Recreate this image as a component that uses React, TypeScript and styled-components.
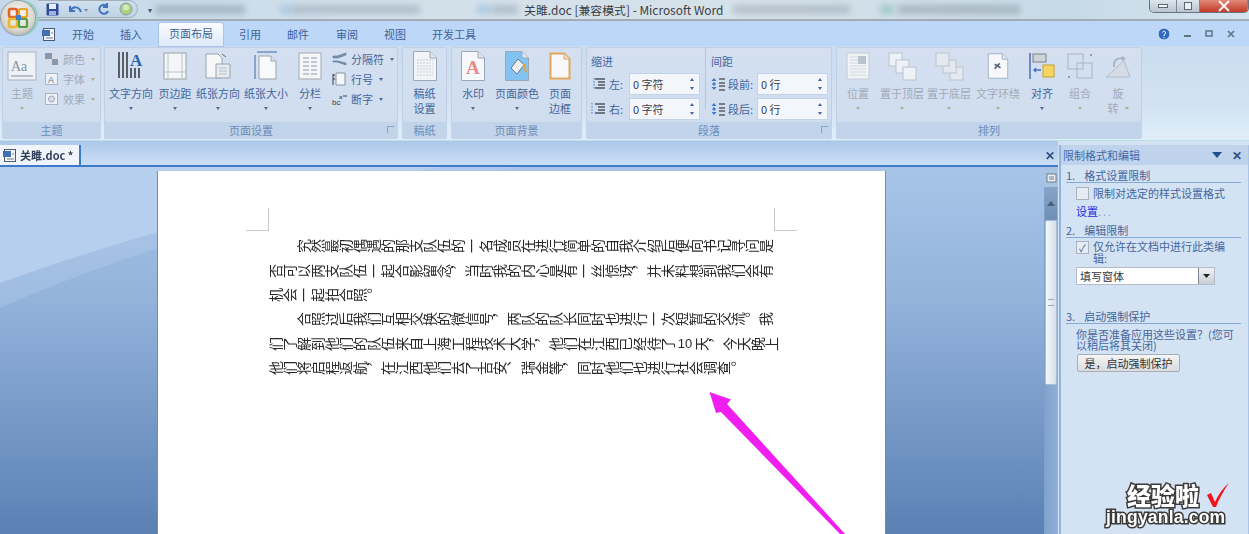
import React from "react";
import styled, { createGlobalStyle } from "styled-components";

const Global = createGlobalStyle`
  html, body { margin: 0; padding: 0; background: #d4e3f3; overflow: hidden; }
  body { font-family: "Noto Sans CJK SC", "Liberation Sans", sans-serif; }
`;

const Stage = styled.div`
  position: relative;
  width: 1249px;
  height: 534px;
  overflow: hidden;
`;
const Shell = styled.div`
  width: 1249px;
  height: 534px;
  display: flex;
  flex-direction: column;
  filter: blur(0.45px);
`;

/* title bar */
const TitleBar = styled.div`
  height: 19px;
  flex: none;
  display: flex;
  align-items: center;
  padding-left: 120px;
  background: linear-gradient(90deg, #c3d9ea 0%, #d2e0ea 30%, #d6e2ea 60%, #c6dae6 85%, #d3e4ef 100%);
  border-bottom: 2px solid #a3abb5;
  box-sizing: content-box;
`;
const Quick = styled.div`
  position: absolute;
  left: 38px;
  top: 0;
  width: 100px;
  height: 18px;
  display: flex;
  align-items: center;
  gap: 9px;
  padding-left: 8px;
  box-sizing: border-box;
  border-radius: 0 10px 10px 0;
  border: 1px solid #a4adb8;
  border-left: none;
  background: linear-gradient(#cfe0ee, #bfd3e5);
`;
const QuickMore = styled.span`
  margin-left: 28px;
  font-size: 8px;
  color: #44526a;
  width: 7px;
`;
const Ghost = styled.span<{ $w: number; $c: string; $ml?: number }>`
  flex: none;
  width: ${(p) => p.$w}px;
  height: 9px;
  margin-left: ${(p) => p.$ml ?? 0}px;
  background: ${(p) => p.$c};
  filter: blur(3px);
  opacity: 0.55;
`;
const TitleText = styled.span`
  flex: none;
  width: 199px;
  margin-left: 6px;
  font-size: 11.9px;
  color: #3a3d44;
  white-space: nowrap;
`;
const WinButtons = styled.div`
  margin-left: auto;
  width: 100px;
  height: 13px;
  margin-top: -6px;
  display: flex;
  box-sizing: border-box;
  border: 1px solid #6d7480;
  border-top: none;
  border-radius: 0 0 5px 5px;
  overflow: hidden;
`;
const WinButton = styled.span<{ $w: number; $close?: boolean }>`
  width: ${(p) => p.$w}px;
  display: flex;
  align-items: center;
  justify-content: center;
  background: ${(p) => (p.$close ? "linear-gradient(#e2897a, #c23a26)" : "linear-gradient(#dfe7ee, #b7c3cf)")};
  border-right: 1px solid #7f8792;
`;

/* tabs */
const TabBar = styled.div`
  height: 25px;
  flex: none;
  display: flex;
  align-items: center;
  padding-left: 59px;
  background: #bcd7f8;
  position: relative;
`;
const Tab = styled.div<{ $active?: boolean; $ml?: number }>`
  width: ${(p) => (p.$active ? "64px" : "48px")};
  margin-left: ${(p) => p.$ml ?? 0}px;
  height: ${(p) => (p.$active ? "23px" : "auto")};
  margin-top: ${(p) => (p.$active ? "2px" : "0")};
  text-align: center;
  font-size: 11px;
  line-height: 20px;
  color: #3f6297;
  border-radius: 3px 3px 0 0;
  background: ${(p) => (p.$active ? "linear-gradient(#fafcff, #dce9f7)" : "transparent")};
  box-shadow: ${(p) => (p.$active ? "0 0 0 1px #a9c6ea" : "none")};
`;
const RightTools = styled.div`
  margin-left: auto;
  display: flex;
  align-items: center;
  gap: 13px;
  padding-right: 14px;
`;
const DocMark = styled.span`
  position: absolute;
  left: 41px;
  top: 2px;
`;

/* ribbon */
const Ribbon = styled.div`
  height: 95px;
  flex: none;
  box-sizing: border-box;
  display: flex;
  gap: 3px;
  padding: 1px 4px 1px 2px;
  background: linear-gradient(#cbdcf0, #d2e2f3 60%, #dfeef9);
  border-bottom: 1px solid #b9dfe6;
`;
const Group = styled.section<{ $w: number; $mr?: number }>`
  flex: none;
  width: ${(p) => p.$w}px;
  margin-right: ${(p) => p.$mr ?? 0}px;
  display: flex;
  flex-direction: column;
  border-radius: 3px;
  overflow: hidden;
  background: linear-gradient(#d4e0f0, #d2dff0 40%, #cddcee);
  box-shadow: inset 0 0 0 1px #bfd0e6;
`;
const GroupBody = styled.div`
  height: 75px;
  flex: none;
  display: flex;
  align-items: flex-start;
`;
const GroupLabel = styled.div`
  flex: 1;
  position: relative;
  text-align: center;
  font-size: 11px;
  line-height: 17px;
  color: #6a8cb9;
  background: #c1d4ea;
`;
const Launcher = styled.span`
  position: absolute;
  right: 4px;
  top: 4px;
  width: 6px;
  height: 6px;
  border: 1px solid #8ca4c4;
  border-width: 1px 0 0 1px;
`;
const Large = styled.div<{ $w: number; $off?: boolean; $ml?: number }>`
  flex: none;
  width: ${(p) => p.$w}px;
  margin-left: ${(p) => p.$ml ?? 0}px;
  display: flex;
  flex-direction: column;
  align-items: center;
  padding-top: 3px;
  font-size: 11px;
  line-height: 15px;
  color: ${(p) => (p.$off ? "#a0aab8" : "#44659b")};
  white-space: nowrap;
`;
const LargeIcon = styled.div`
  height: 32px;
  margin-bottom: 4px;
  display: flex;
  align-items: center;
`;
const Caret = styled.span<{ $off?: boolean }>`
  width: 0;
  height: 0;
  margin: 6px 0;
  border: 2.5px solid transparent;
  border-top: 3px solid ${(p) => (p.$off ? "#b3a998" : "#4c6a96")};
  border-bottom: none;
  display: inline-block;
`;
const SmallColumn = styled.div<{ $off?: boolean; $ml?: number }>`
  display: flex;
  flex-direction: column;
  margin-left: ${(p) => p.$ml ?? 0}px;
  padding-top: 2px;
  font-size: 11px;
  color: ${(p) => (p.$off ? "#a0aab8" : "#44659b")};
`;
const SmallItem = styled.div`
  height: 20px;
  display: flex;
  align-items: center;
  gap: 3px;
  white-space: nowrap;
`;
const InlineCaretItem = styled(SmallItem)`
  height: 15px;
`;
const SmallCaret = styled(Caret)`
  margin: 0 0 0 3px;
`;

/* paragraph group */
const ParaColumn = styled.div<{ $w: number; $divider?: boolean }>`
  flex: none;
  width: ${(p) => p.$w}px;
  box-sizing: border-box;
  padding: 7px ${(p) => (p.$divider ? "5px" : "0")} 0 5px;
  border-right: ${(p) => (p.$divider ? "1px solid #b4c6dc" : "none")};
  height: 62px;
`;
const ParaTitle = styled.div`
  font-size: 11px;
  line-height: 14px;
  color: #44659b;
  margin-bottom: 5px;
`;
const ParaRow = styled.div`
  display: flex;
  align-items: center;
  gap: 3px;
  height: 22px;
  margin-bottom: 3px;
  font-size: 11px;
  color: #44659b;
`;
const Spin = styled.div<{ $w: number }>`
  width: ${(p) => p.$w}px;
  height: 22px;
  box-sizing: border-box;
  margin-left: auto;
  display: flex;
  align-items: center;
  justify-content: space-between;
  padding: 0 5px 0 3px;
  background: #f3f7fc;
  border: 1px solid #c3d3e7;
  font-size: 11px;
  color: #3b3f48;
`;
const SpinArrows = styled.div`
  display: flex;
  flex-direction: column;
  gap: 6px;
`;
const ArrowTip = styled.span<{ $up?: boolean }>`
  width: 0;
  height: 0;
  border: 2.5px solid transparent;
  ${(p) => (p.$up ? "border-bottom: 3px solid #44659b; border-top: none;" : "border-top: 3px solid #44659b; border-bottom: none;")}
`;

/* work area */
const Work = styled.div`
  flex: 1;
  min-height: 0;
  display: flex;
`;
const LeftSide = styled.div`
  width: 1058px;
  flex: none;
  display: flex;
  flex-direction: column;
`;
const Strip = styled.div`
  height: 24px;
  flex: none;
  display: flex;
  align-items: flex-end;
  border-bottom: 2px solid #3e7bcb;
  background: linear-gradient(#abc7ea, #cbdef5);
`;
const DocTab = styled.div`
  width: 81px;
  height: 20px;
  display: flex;
  align-items: center;
  gap: 3px;
  padding-left: 2px;
  box-sizing: border-box;
  background: #f0f5fb;
  border-right: 2px solid #3e7bcb;
  font-size: 11px;
  font-weight: 700;
  color: #2f3f58;
  white-space: nowrap;
`;
const StripClose = styled.span`
  margin-left: auto;
  margin-right: 3px;
  margin-bottom: 3px;
  font-size: 12px;
  font-weight: 700;
  color: #30507f;
  line-height: 14px;
`;
const DocRow = styled.div`
  flex: 1;
  display: flex;
  min-height: 0;
`;
const DocArea = styled.div`
  position: relative;
  width: 1044px;
  flex: none;
  padding: 4px 0 0 158px;
  box-sizing: border-box;
  overflow: hidden;
  background: linear-gradient(#a8c5e8, #93b3db 36%, #5a80b4);
`;
const Swoosh = styled.svg`
  position: absolute;
  left: 0;
  top: 0;
`;
const Page = styled.div`
  position: relative;
  width: 727px;
  height: 400px;
  box-sizing: border-box;
  padding: 37px 88px 0 88px;
  background: #fff;
  box-shadow: -1px 0 0 #85898f, 1px 0 0 #85898f;
`;
const CropRow = styled.div`
  display: flex;
  justify-content: space-between;
  width: 551px;
  height: 22px;
  margin-bottom: 4px;
`;
const Crop = styled.span<{ $right?: boolean }>`
  width: 22px;
  height: 22px;
  border-bottom: 1px solid #c9c9c9;
  ${(p) => (p.$right ? "border-left: 1px solid #c9c9c9;" : "border-right: 1px solid #c9c9c9;")}
`;
const Line = styled.div<{ $indent?: boolean }>`
  height: 24.4px;
  display: flex;
  align-items: center;
  margin-left: 23px;
  padding-left: ${(p) => (p.$indent ? "28px" : "0")};
  font-size: 14px;
  color: #2a2a2a;
  white-space: nowrap;
  width: 530px;
`;
/* the document uses rotated text: vertical glyph forms turned a quarter to the left */
const Glyph = styled.span`
  flex: none;
  width: 14px;
  height: 14px;
  line-height: 14px;
  writing-mode: vertical-rl;
  transform: rotate(-90deg);
`;
const Latin = styled.span`
  flex: none;
  width: 20px;
  text-align: center;
  font-family: "Liberation Sans", sans-serif;
  font-size: 13px;
`;

/* scroll bar */
const ScrollBar = styled.div`
  width: 14px;
  flex: none;
  display: flex;
  flex-direction: column;
  align-items: center;
  background: linear-gradient(90deg, #7fa1cb, #8fb0d8);
`;
const RulerBtn = styled.div`
  height: 20px;
  width: 14px;
  display: flex;
  align-items: center;
  justify-content: center;
  background: #a9c3e2;
`;
const ScrollUp = styled.div`
  width: 12px;
  height: 33px;
  display: flex;
  align-items: center;
  justify-content: center;
  background: linear-gradient(#88a4c6, #6f8fb6);
`;
const Thumb = styled.div`
  width: 12px;
  height: 165px;
  display: flex;
  align-items: center;
  justify-content: center;
  background: linear-gradient(90deg, #f4f7fb, #d6e0ea);
  border: 1px solid #a8bdd6;
  border-radius: 2px;
  box-sizing: border-box;
`;
const Grip = styled.span`
  width: 6px;
  height: 5px;
  border-top: 1px solid #9aa9bb;
  border-bottom: 1px solid #9aa9bb;
`;

/* task pane */
const Pane = styled.aside`
  flex: 1;
  margin: 4px 0 0 1px;
  display: flex;
  flex-direction: column;
  background: #d4e3f3;
  border-left: 2px solid #92b3db;
  border-right: 3px solid #a9c4e4;
  color: #44659b;
  font-size: 11px;
  line-height: 12px;
`;
const PaneHead = styled.div`
  height: 20px;
  flex: none;
  display: flex;
  align-items: center;
  padding: 0 6px 0 2px;
  background: #bfd3ec;
  color: #4668a3;
`;
const PaneActions = styled.div`
  margin-left: auto;
  display: flex;
  align-items: center;
  gap: 10px;
  color: #30507f;
  font-weight: 700;
  font-size: 12px;
`;
const PaneBody = styled.div`
  padding: 3px 7px 0 5px;
`;
const SectionTitle = styled.div<{ $mt?: number }>`
  margin-top: ${(p) => p.$mt ?? 0}px;
  border-bottom: 1px solid #84a8d8;
  display: flex;
  gap: 9px;
  line-height: 14px;
  height: 14px;
`;
const CheckRow = styled.div<{ $mt: number }>`
  display: flex;
  gap: 4px;
  margin: ${(p) => p.$mt}px 0 0 10px;
`;
const CheckText = styled.span`
  width: 132px;
  line-height: 11.5px;
`;
const Check = styled.span`
  width: 11px;
  height: 11px;
  flex: none;
  display: flex;
  align-items: center;
  justify-content: center;
  background: #e6ecf4;
  border: 1px solid #aab2bd;
  font-size: 10px;
  color: #3f5070;
`;
const LinkText = styled.div`
  margin: 5px 0 0 10px;
  color: #2a2ae6;
`;
const LinkDots = styled.span`
  color: #7f9fe0;
  letter-spacing: 2px;
`;
const SelectBox = styled.div`
  width: 139px;
  height: 18px;
  margin: 3px 0 0 10px;
  box-sizing: border-box;
  display: flex;
  align-items: center;
  justify-content: space-between;
  padding-left: 3px;
  background: #fff;
  border: 1px solid #b3bdca;
  color: #34383f;
`;
const SelectArrow = styled.span`
  width: 15px;
  height: 16px;
  display: flex;
  align-items: center;
  justify-content: center;
  background: linear-gradient(#eef1f4, #c9ced6);
  border-left: 1px solid #7e8792;
`;
const Hint = styled.div`
  margin: 5px 0 0 10px;
  width: 165px;
  line-height: 11px;
`;
const PaneButton = styled.div`
  width: 103px;
  height: 18px;
  margin: 3px 0 0 11px;
  display: flex;
  align-items: center;
  justify-content: center;
  box-sizing: border-box;
  background: linear-gradient(#f4f5f6, #d9dbdf);
  border: 1px solid #a9adb4;
  border-radius: 2px;
  color: #333;
  white-space: nowrap;
`;

/* overlays */
const Orb = styled.div`
  position: absolute;
  left: 1px;
  top: 1px;
  width: 34px;
  height: 34px;
  border-radius: 50%;
  display: flex;
  align-items: center;
  justify-content: center;
  background: radial-gradient(circle at 50% 40%, #fdfdfb, #d9d7cf 60%, #8c8f90);
  box-shadow: 0 0 0 1px #96a0a4, 3px 0 0 1px #9bd0c8;
`;
const ArrowLayer = styled.svg`
  position: absolute;
  left: 700px;
  top: 385px;
`;
const Watermark = styled.div`
  position: absolute;
  left: 1106px;
  top: 481px;
  width: 130px;
  font-family: "Liberation Sans", "Noto Sans CJK SC", sans-serif;
  font-weight: 900;
  color: #fff;
  -webkit-text-stroke: 3px #3a3a3a;
  paint-order: stroke fill;
`;
const MarkTop = styled.div`
  display: flex;
  align-items: center;
  padding-left: 21px;
  font-size: 24px;
  line-height: 28px;
  font-family: "Noto Sans CJK SC", sans-serif;
  gap: 7px;
`;
const MarkBottom = styled.div`
  font-size: 17.5px;
  line-height: 17px;
  white-space: nowrap;
  letter-spacing: 0.2px;
`;

/* icons */
const Page32 = ({ children, w = 26, fill = "#f6f8fb" }: { children?: React.ReactNode; w?: number; fill?: string }) => (
  <svg width={w} height={32} viewBox="0 0 26 32">
    <path d="M1.5 1.5H18L24.5 8V30.5H1.5Z" fill={fill} stroke="#98a8bc" />
    <path d="M18 1.5V8H24.5" fill="#dfe6ef" stroke="#98a8bc" />
    {children}
  </svg>
);
const ThemeIcon = () => (
  <svg width={30} height={30} viewBox="0 0 30 30">
    <rect x="1" y="1" width="28" height="28" fill="#eef1f5" stroke="#a7b4c4" />
    <text x="4" y="20" fontFamily="Liberation Serif" fontSize="14" fill="#8793a5">Aa</text>
    <rect x="4" y="24" width="22" height="2" fill="#b8c2cf" />
  </svg>
);
const TextDirIcon = () => (
  <svg width={28} height={30} viewBox="0 0 28 30">
    {[2, 6, 10, 14, 18, 22].map((x, i) => (
      <path key={x} d={`M${x} ${i < 3 ? 1 : 17}V27`} stroke="#3b3f48" strokeWidth="1.6" />
    ))}
    <text x="13" y="15" fontFamily="Liberation Serif" fontWeight="700" fontSize="17" fill="#2f62ad">A</text>
  </svg>
);
const MarginIcon = () => (
  <svg width={24} height={28} viewBox="0 0 24 28">
    <rect x="1" y="1" width="22" height="26" fill="#f5f6f8" stroke="#9aa0a8" />
    <path d="M5 1V27M19 1V27M1 20H23" stroke="#bcc3cc" />
  </svg>
);
const OrientIcon = () => (
  <svg width={28} height={30} viewBox="0 0 28 30">
    <path d="M2 3H14L18 7V27H2Z" fill="#f6f7f9" stroke="#9aa3ae" />
    <path d="M12 13H26V27H12Z" fill="#e7ebf0" stroke="#9aa3ae" />
    <path d="M15 17H23M15 20H23M15 23H23" stroke="#b8c0ca" />
    <path d="M18 3L22 6" stroke="#5a6a80" />
  </svg>
);
const SizeIcon = () => (
  <svg width={24} height={30} viewBox="0 0 24 30">
    <path d="M1 4V28" stroke="#3f6aa6" />
    <path d="M3 1H23" stroke="#3f6aa6" />
    <path d="M5 5H17L22 10V28H5Z" fill="#f8f9fb" stroke="#9aa3ae" />
    <path d="M17 5V10H22" fill="#e0e5ec" stroke="#9aa3ae" />
  </svg>
);
const ColumnsIcon = () => (
  <svg width={24} height={28} viewBox="0 0 24 28">
    <rect x="1" y="1" width="22" height="26" fill="#f5f6f8" stroke="#a4a9b0" />
    {[6, 10, 14, 18, 22].map((y) => (
      <path key={y} d={`M5 ${y}H11M13 ${y}H19`} stroke="#c3c9d1" strokeWidth="2" />
    ))}
  </svg>
);
const SmallGlyph = ({ kind }: { kind: string }) => (
  <svg width={16} height={14} viewBox="0 0 16 14">
    {kind === "color" && (
      <>
        <rect x="1" y="1" width="13" height="12" fill="#d7dde6" />
        <rect x="1" y="1" width="7" height="6" fill="#8a98ac" />
        <rect x="8" y="7" width="6" height="6" fill="#8a98ac" />
      </>
    )}
    {kind === "font" && (
      <>
        <rect x="1.5" y="1.5" width="12" height="11" fill="#eef1f5" stroke="#aab4c1" />
        <text x="4" y="11" fontSize="9" fontFamily="Liberation Sans" fill="#6c7c93">A</text>
      </>
    )}
    {kind === "effect" && (
      <>
        <rect x="1.5" y="1.5" width="12" height="11" fill="#eef1f5" stroke="#aab4c1" />
        <circle cx="7.5" cy="7" r="3" fill="#d7dde6" stroke="#9aa7b8" />
      </>
    )}
    {kind === "break" && (
      <path d="M1 4H5L14 1V3L6 6H1ZM1 9H6L14 11V13L5 10H1Z" fill="#8593a6" stroke="#3f6aa6" strokeWidth=".5" />
    )}
    {kind === "lines" && (
      <>
        <path d="M4 1H13V13H4Z" fill="#f5f6f8" stroke="#8593a6" />
        <path d="M1 2V13M2 2V4M2 6V8" stroke="#3b3f48" />
      </>
    )}
    {kind === "hyphen" && (
      <>
        <text x="0" y="13" fontSize="8" fontFamily="Liberation Sans" fill="#3b3f48">bc</text>
        <text x="7" y="7" fontSize="6" fontFamily="Liberation Sans" fill="#3b3f48">a</text>
        <path d="M11 4H15" stroke="#3b3f48" />
      </>
    )}
  </svg>
);
const IndentIcon = ({ dashed }: { dashed?: boolean }) => (
  <svg width={15} height={14} viewBox="0 0 15 14">
    <path d="M4 2H14M7 5H14M7 8H14M4 11H14" stroke="#50565f" strokeWidth="1.4" />
    <path d={dashed ? "M1 1V13" : "M3 1V13"} stroke="#3f7acb" strokeDasharray="1.5 1.5" />
  </svg>
);
const SpacingIcon = () => (
  <svg width={14} height={14} viewBox="0 0 14 14">
    <path d="M8 2H14M8 6H14M8 9H14M8 13H14" stroke="#5a5f68" strokeWidth="1.6" />
    <path d="M3 1L5.5 4H.5ZM3 13L5.5 10H.5ZM3 5L5 7L3 9L1 7Z" fill="#3f7acb" />
  </svg>
);
const WatermarkPageIcon = () => (
  <Page32>
    <text x="6" y="24" fontFamily="Liberation Serif" fontWeight="700" fontSize="19" fill="#e58d86">A</text>
  </Page32>
);
const PageColorIcon = () => (
  <Page32 fill="#82c3f2">
    <path d="M7 18L14 9L20 15L13 24Z" fill="#eceff3" stroke="#6c7787" />
    <path d="M20 14L22 22" stroke="#e2a73f" strokeWidth="2" />
  </Page32>
);
const PageBorderIcon = () => (
  <svg width={22} height={28} viewBox="0 0 22 28">
    <path d="M1.5 1.5H15L20.5 7V26.5H1.5Z" fill="#f7f8fa" stroke="#e3a65d" strokeWidth="2" />
    <path d="M15 1.5V7H20.5" fill="#f3dec4" stroke="#d5a670" />
  </svg>
);
const GridPageIcon = () => (
  <Page32 fill="#f2f4f7">
    {[10, 13, 16, 19, 22, 25].map((y) => (
      <path key={y} d={`M5 ${y}H21`} stroke="#c8ced6" strokeDasharray="2 1" />
    ))}
  </Page32>
);
const PositionIcon = () => (
  <svg width={24} height={28} viewBox="0 0 24 28">
    <rect x="1" y="1" width="22" height="26" fill="#f0f3f6" stroke="#c4ccd6" />
    {[5, 8, 11, 14, 17, 20, 23].map((y) => (
      <path key={y} d={`M4 ${y}H20`} stroke="#d3d9e0" />
    ))}
    <rect x="12" y="4" width="8" height="8" fill="#b9c3cf" />
  </svg>
);
const StackIcon = ({ flip }: { flip?: boolean }) => {
  const rects = [
    [1, 1],
    [8, 8],
    [15, 15],
  ];
  return (
    <svg width={29} height={29} viewBox="0 0 29 29">
      {(flip ? [...rects].reverse() : rects).map(([x, y]) => (
        <rect key={x} x={x} y={y} width="13" height="13" fill={flip ? "#e4e9ef" : "#eef1f5"} stroke="#b9c3cf" />
      ))}
    </svg>
  );
};
const WrapIcon = () => (
  <Page32 w={22}>
    <path d="M9 14L16 18M9 19L15 13" stroke="#58657a" strokeWidth="2" />
  </Page32>
);
const AlignIcon = () => (
  <svg width={26} height={28} viewBox="0 0 26 28">
    <path d="M1 1V27" stroke="#4168ad" strokeWidth="1.4" />
    <rect x="4" y="2" width="13" height="8" fill="#cfd3d8" stroke="#7b8089" />
    <rect x="14" y="13" width="11" height="12" fill="#f6d55f" stroke="#c7a02e" />
    <path d="M12 18H5M7 16L5 18L7 20" stroke="#3f73c2" strokeWidth="1.3" fill="none" />
  </svg>
);
const GroupIcon = () => (
  <svg width={26} height={26} viewBox="0 0 26 26">
    <rect x="1" y="1" width="15" height="15" fill="none" stroke="#aab4c1" />
    <rect x="10" y="10" width="15" height="15" fill="none" stroke="#aab4c1" />
    <circle cx="2" cy="24" r="1" fill="#7f8b9b" />
    <circle cx="24" cy="2" r="1" fill="#7f8b9b" />
  </svg>
);
const RotateIcon = () => (
  <svg width={28} height={26} viewBox="0 0 28 26">
    <path d="M2 24L20 8L26 24Z" fill="#d5dce5" stroke="#b2bcc9" />
    <path d="M10 14C9 6 15 4 20 6" fill="none" stroke="#a3aebc" strokeWidth="1.6" />
    <path d="M18 3L22 6L18 8Z" fill="#a3aebc" />
  </svg>
);
const WordDocIcon = () => (
  <svg width={15} height={15} viewBox="0 0 15 15">
    <rect x="2.5" y="1.5" width="11" height="12" fill="#f3f6fa" stroke="#4b5a70" />
    <rect x="1" y="3" width="8" height="6" fill="#3f6fb5" />
    <path d="M5 11H12M10 6H12" stroke="#6c7a8e" />
  </svg>
);
const OfficeLogo = () => (
  <svg width={22} height={22} viewBox="0 0 22 22">
    <rect x="2" y="2" width="8" height="8" rx="1.5" fill="none" stroke="#e0662b" strokeWidth="2.6" />
    <rect x="12" y="2" width="8" height="8" rx="1.5" fill="none" stroke="#e9a12a" strokeWidth="2.2" />
    <rect x="2" y="12" width="8" height="8" rx="1.5" fill="none" stroke="#e9b92c" strokeWidth="2.6" />
    <rect x="12" y="12" width="8" height="8" rx="1.5" fill="none" stroke="#4f9f46" strokeWidth="2.2" />
    <rect x="9" y="8" width="5" height="5" fill="#3f7fc8" />
  </svg>
);

const toGlyphs = (text: string) =>
  text.split("").map((ch, i) => (ch === "#" ? <Latin key={i}>10</Latin> : <Glyph key={i}>{ch}</Glyph>));

const PARAGRAPH: { text: string; indent?: boolean }[] = [
  { text: "究然最初偶遇的那支队伍的一名成员在进行简单的自我介绍后便向书记寻问是", indent: true },
  { text: "否可以两支队伍一起合影留念，当时我的内心是有一丝惊讶，并未料想到我们会有" },
  { text: "机会一起拍合照。" },
  { text: "合照过后我们互相交换的微信号，两队的队长同时也进行一次短暂的交流。我", indent: true },
  { text: "们了解到他们的队伍来自上海工程技术大学，他们在江西已经待了#天，今天晚上" },
  { text: "他们将启程返航，在江西他们去了吉安、瑞金等，同时他们也进行社会调查。" },
];

const TABS: { label: string; ml?: number }[] = [
  { label: "开始" },
  { label: "插入" },
  { label: "页面布局", ml: 4 },
  { label: "引用", ml: 3 },
  { label: "邮件" },
  { label: "审阅", ml: 1 },
  { label: "视图" },
  { label: "开发工具", ml: 11 },
];

const ArrangeItems: { label: string[]; w: number; icon: React.ReactNode; off: boolean; inlineCaret?: boolean }[] = [
  { label: ["位置"], w: 44, icon: <PositionIcon />, off: true },
  { label: ["置于顶层"], w: 44, icon: <StackIcon />, off: true },
  { label: ["置于底层"], w: 50, icon: <StackIcon flip />, off: true },
  { label: ["文字环绕"], w: 48, icon: <WrapIcon />, off: true },
  { label: ["对齐"], w: 40, icon: <AlignIcon />, off: false },
  { label: ["组合"], w: 36, icon: <GroupIcon />, off: true },
  { label: ["旋", "转"], w: 40, icon: <RotateIcon />, off: true, inlineCaret: true },
];

const SpinField = ({ value }: { value: string }) => (
  <Spin $w={71}>
    {value}
    <SpinArrows>
      <ArrowTip $up />
      <ArrowTip />
    </SpinArrows>
  </Spin>
);

export default function App() {
  return (
    <Stage>
      <Global />
      <Shell>
        <TitleBar>
          <QuickMore>▾</QuickMore>
          <Ghost $w={90} $c="#8b97a5" />
          <Ghost $w={12} $c="#8fb7dc" $ml={35} />
          <Ghost $w={128} $c="#98a6b4" />
          <Ghost $w={14} $c="#8fb7dc" $ml={57} />
          <Ghost $w={26} $c="#98a6b4" $ml={1} />
          <TitleText>关雎.doc [兼容模式] - Microsoft Word</TitleText>
          <Ghost $w={117} $c="#9aa7b3" $ml={10} />
          <Ghost $w={14} $c="#7fb9ad" $ml={30} />
          <Ghost $w={122} $c="#8d99a6" $ml={4} />
          <WinButtons>
            <WinButton $w={27}>
              <svg width={10} height={5}><rect x=".5" y=".5" width="9" height="3" fill="#f5f7f9" stroke="#5e6670" /></svg>
            </WinButton>
            <WinButton $w={24}>
              <svg width={10} height={10}><rect x="1.5" y="1.5" width="7" height="7" fill="#edf1f5" stroke="#5e6670" /></svg>
            </WinButton>
            <WinButton $w={49} $close>
              <svg width={16} height={12}><path d="M3 1L13 11M13 1L3 11" stroke="#f4f4f4" strokeWidth="2" /></svg>
            </WinButton>
          </WinButtons>
        </TitleBar>

        <TabBar>
          <DocMark><WordDocIcon /></DocMark>
          {TABS.map((tab) => (
            <Tab key={tab.label} $active={tab.label === "页面布局"} $ml={tab.ml}>
              {tab.label}
            </Tab>
          ))}
          <RightTools>
            <svg width={14} height={14} viewBox="0 0 14 14">
              <circle cx="7" cy="7" r="6" fill="#2f6bc4" stroke="#d5e2f3" />
              <path d="M5.5 5.5C6 3.5 9 4 8.5 6L7 8V9M7 10V11" stroke="#fff" fill="none" />
            </svg>
            <svg width={8} height={8}><path d="M0 6H7" stroke="#5f7184" strokeWidth="2" /></svg>
            <svg width={9} height={9}><rect x="1" y="2" width="6" height="5" fill="none" stroke="#5f7184" strokeWidth="1.5" /></svg>
            <svg width={8} height={8}><path d="M1 1L7 7M7 1L1 7" stroke="#5f7184" strokeWidth="1.6" /></svg>
          </RightTools>
        </TabBar>

        <Ribbon>
          <Group $w={99}>
            <GroupBody>
              <Large $w={40} $off>
                <LargeIcon><ThemeIcon /></LargeIcon>
                主题
                <Caret $off />
              </Large>
              <SmallColumn $off $ml={2}>
                <SmallItem><SmallGlyph kind="color" />颜色<SmallCaret $off /></SmallItem>
                <SmallItem><SmallGlyph kind="font" />字体<SmallCaret $off /></SmallItem>
                <SmallItem><SmallGlyph kind="effect" />效果<SmallCaret $off /></SmallItem>
              </SmallColumn>
            </GroupBody>
            <GroupLabel>主题</GroupLabel>
          </Group>

          <Group $w={294} $mr={1}>
            <GroupBody>
              <Large $w={46} $ml={4}><LargeIcon><TextDirIcon /></LargeIcon>文字方向<Caret /></Large>
              <Large $w={42}><LargeIcon><MarginIcon /></LargeIcon>页边距<Caret /></Large>
              <Large $w={44}><LargeIcon><OrientIcon /></LargeIcon>纸张方向<Caret /></Large>
              <Large $w={52}><LargeIcon><SizeIcon /></LargeIcon>纸张大小<Caret /></Large>
              <Large $w={36}><LargeIcon><ColumnsIcon /></LargeIcon>分栏<Caret /></Large>
              <SmallColumn $ml={4}>
                <SmallItem><SmallGlyph kind="break" />分隔符<SmallCaret /></SmallItem>
                <SmallItem><SmallGlyph kind="lines" />行号<SmallCaret /></SmallItem>
                <SmallItem><SmallGlyph kind="hyphen" />断字<SmallCaret /></SmallItem>
              </SmallColumn>
            </GroupBody>
            <GroupLabel>页面设置<Launcher /></GroupLabel>
          </Group>

          <Group $w={45} $mr={1}>
            <GroupBody>
              <Large $w={45}><LargeIcon><GridPageIcon /></LargeIcon>稿纸<br />设置</Large>
            </GroupBody>
            <GroupLabel>稿纸</GroupLabel>
          </Group>

          <Group $w={131} $mr={1}>
            <GroupBody>
              <Large $w={44}><LargeIcon><WatermarkPageIcon /></LargeIcon>水印<Caret /></Large>
              <Large $w={44}><LargeIcon><PageColorIcon /></LargeIcon>页面颜色<Caret /></Large>
              <Large $w={42}><LargeIcon><PageBorderIcon /></LargeIcon>页面<br />边框</Large>
            </GroupBody>
            <GroupLabel>页面背景</GroupLabel>
          </Group>

          <Group $w={246} $mr={1}>
            <GroupBody>
              <ParaColumn $w={120} $divider>
                <ParaTitle>缩进</ParaTitle>
                <ParaRow><IndentIcon />左:<SpinField value="0 字符" /></ParaRow>
                <ParaRow><IndentIcon dashed />右:<SpinField value="0 字符" /></ParaRow>
              </ParaColumn>
              <ParaColumn $w={122}>
                <ParaTitle>间距</ParaTitle>
                <ParaRow><SpacingIcon />段前:<SpinField value="0 行" /></ParaRow>
                <ParaRow><SpacingIcon />段后:<SpinField value="0 行" /></ParaRow>
              </ParaColumn>
            </GroupBody>
            <GroupLabel>段落<Launcher /></GroupLabel>
          </Group>

          <Group $w={306}>
            <GroupBody>
              {ArrangeItems.map((item) => (
                <Large key={item.label[0]} $w={item.w} $off={item.off}>
                  <LargeIcon>{item.icon}</LargeIcon>
                  {item.label[0]}
                  {item.inlineCaret ? (
                    <InlineCaretItem>{item.label[1]}<SmallCaret $off /></InlineCaretItem>
                  ) : (
                    <Caret $off={item.off} />
                  )}
                </Large>
              ))}
            </GroupBody>
            <GroupLabel>排列</GroupLabel>
          </Group>
        </Ribbon>

        <Work>
          <LeftSide>
            <Strip>
              <DocTab><WordDocIcon />关雎.doc *</DocTab>
              <StripClose>✕</StripClose>
            </Strip>
            <DocRow>
              <DocArea>
                <Swoosh width={1044} height={367} viewBox="0 0 1044 367">
                  <path d="M0 0V116Q200 44 440 0Z" fill="#b6cfee" />
                  <path d="M0 116Q200 44 440 0H520Q230 40 0 141Z" fill="#b6cfee" opacity=".35" />
                </Swoosh>
                <Page>
                  <CropRow><Crop /><Crop $right /></CropRow>
                  {PARAGRAPH.map((line) => (
                    <Line key={line.text} $indent={line.indent}>{toGlyphs(line.text)}</Line>
                  ))}
                </Page>
              </DocArea>
              <ScrollBar>
                <RulerBtn>
                  <svg width={11} height={11} viewBox="0 0 11 11">
                    <rect x="1" y="2" width="9" height="8" fill="#e9edf2" stroke="#6e7c90" />
                    <path d="M3 5H8M3 7H8" stroke="#6e7c90" />
                  </svg>
                </RulerBtn>
                <ScrollUp>
                  <svg width={8} height={5}><path d="M4 0L8 5H0Z" fill="#4a5f7c" /></svg>
                </ScrollUp>
                <Thumb><Grip /></Thumb>
              </ScrollBar>
            </DocRow>
          </LeftSide>

          <Pane>
            <PaneHead>
              限制格式和编辑
              <PaneActions>
                <svg width={10} height={6}><path d="M0 0H10L5 6Z" fill="#1f4f8f" /></svg>
                ✕
              </PaneActions>
            </PaneHead>
            <PaneBody>
              <SectionTitle><span>1.</span>格式设置限制</SectionTitle>
              <CheckRow $mt={4}><Check />限制对选定的样式设置格式</CheckRow>
              <LinkText>设置<LinkDots>...</LinkDots></LinkText>
              <SectionTitle $mt={6}><span>2.</span>编辑限制</SectionTitle>
              <CheckRow $mt={3}>
                <Check>✓</Check>
                <CheckText>仅允许在文档中进行此类编辑:</CheckText>
              </CheckRow>
              <SelectBox>
                填写窗体
                <SelectArrow>
                  <svg width={7} height={4}><path d="M0 0H7L3.5 4Z" fill="#222" /></svg>
                </SelectArrow>
              </SelectBox>
              <SectionTitle $mt={24}><span>3.</span>启动强制保护</SectionTitle>
              <Hint>你是否准备应用这些设置？(您可以稍后将其关闭)</Hint>
              <PaneButton>是，启动强制保护</PaneButton>
            </PaneBody>
          </Pane>
        </Work>
      </Shell>

      <Orb><OfficeLogo /></Orb>
      <Quick>
        <svg width={13} height={13} viewBox="0 0 13 13">
          <rect x=".5" y=".5" width="12" height="12" rx="1" fill="#2f4a9a" />
          <rect x="3" y="1" width="7" height="5" fill="#e8edf6" />
          <rect x="3" y="8" width="7" height="4" fill="#9fb2d8" />
        </svg>
        <svg width={20} height={13} viewBox="0 0 20 13">
          <path d="M2 3V8H7M2 8C5 3 11 3 13 9" fill="none" stroke="#3f72c0" strokeWidth="2" />
          <path d="M16 6H20L18 9Z" fill="#7b8aa0" />
        </svg>
        <svg width={13} height={13} viewBox="0 0 13 13">
          <path d="M10 3A4.5 4.5 0 1 0 11 8M10 0V4H6" fill="none" stroke="#3f72c0" strokeWidth="2" />
        </svg>
        <svg width={14} height={14} viewBox="0 0 14 14">
          <circle cx="7" cy="7" r="6" fill="#a6d27f" stroke="#8b9aa8" />
          <circle cx="7" cy="5.5" r="3" fill="#d7ebb8" />
        </svg>
      </Quick>

      <ArrowLayer width={160} height={149} viewBox="0 0 160 149">
        <path d="M9.5 7L31 14.5L27 19L145 149H140L21 27L16 28Z" fill="#f01ef0" />
      </ArrowLayer>

      <Watermark>
        <MarkTop>
          经验啦
          <svg width={24} height={26} viewBox="0 0 24 26">
            <path d="M1 13L5 11L9 20C12 13 17 6 23 1C18 8 13 17 10 25H7Z" fill="#f0141e" />
          </svg>
        </MarkTop>
        <MarkBottom>jingyanla.com</MarkBottom>
      </Watermark>
    </Stage>
  );
}
